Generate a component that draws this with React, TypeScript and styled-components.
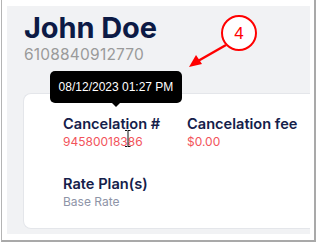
import React from 'react';
import styled, { createGlobalStyle } from 'styled-components';

const GlobalStyle = createGlobalStyle`
  html, body {
    margin: 0;
    padding: 0;
    background: #ffffff;
  }
  body {
    font-family: Inter, 'Noto Sans', sans-serif;
    width: 316px;
    height: 243px;
    overflow: hidden;
  }
`;

const Frame = styled.div`
  position: relative;
  box-sizing: border-box;
  width: 315px;
  height: 242px;
  margin-left: 1px;
  border-left: 1px solid #b4b4b4;
  border-right: 2px solid #a9a9a9;
  border-bottom: 2px solid #a9a9a9;
  padding: 6px 4px 4px 5px;
  background: #ffffff;
`;

const Page = styled.div`
  box-sizing: border-box;
  height: 228px;
  background: #f1f2f4;
  padding: 7px 0 5px 16px;
  display: flex;
  flex-direction: column;
`;

const Header = styled.div`
  padding-left: 1px;
  display: flex;
  flex-direction: column;
  gap: 3px;
`;

const Name = styled.h1`
  margin: 0;
  font-family: Inter, sans-serif;
  font-size: 29px;
  line-height: 30px;
  font-weight: 700;
  letter-spacing: -0.1px;
  color: #0c1a45;
`;

const Phone = styled.div`
  font-family: Inter, sans-serif;
  font-size: 15.5px;
  line-height: 18px;
  color: #9a9a9a;
  letter-spacing: 0.2px;
`;

const Card = styled.div`
  margin-top: 29px;
  flex: 1;
  background: #ffffff;
  border: 1px solid #e4e6ea;
  border-right: none;
  border-radius: 8px 0 0 8px;
  padding: 21px 0 0 39px;
  display: grid;
  grid-template-columns: 124px 1fr;
  row-gap: 25px;
  align-content: start;
`;

const Field = styled.div`
  display: flex;
  flex-direction: column;
`;

const Label = styled.div`
  font-family: Inter, sans-serif;
  font-weight: 600;
  font-size: 14.6px;
  line-height: 18px;
  color: #14204a;
`;

const Value = styled.div<{ $tone: 'red' | 'muted' }>`
  font-family: Inter, sans-serif;
  font-size: 12px;
  line-height: 17px;
  color: ${(p) => (p.$tone === 'red' ? '#f2545b' : '#8e94a7')};
`;

const Tooltip = styled.div`
  position: absolute;
  left: 50px;
  top: 71px;
  width: 132px;
  height: 32px;
  border-radius: 5px;
  background: #000000;
  color: #ffffff;
  font-family: 'Liberation Sans', Arial, sans-serif;
  font-size: 12px;
  display: flex;
  align-items: center;
  justify-content: center;
  &::after {
    content: '';
    position: absolute;
    left: 62px;
    bottom: -4px;
    border-left: 4px solid transparent;
    border-right: 4px solid transparent;
    border-top: 4px solid #000000;
  }
`;

const Overlay = styled.svg`
  position: absolute;
  left: 0;
  top: 0;
  pointer-events: none;
`;

const Callout = () => (
  <Overlay width="316" height="243" viewBox="0 0 316 243">
    <line x1="226" y1="45" x2="198" y2="61" stroke="#f00" strokeWidth="2.5" />
    <polygon points="189,67 196,55 202,64" fill="#f00" />
    <circle cx="239" cy="33" r="17" fill="#fff" stroke="#f00" strokeWidth="2" />
    <text
      x="239"
      y="39"
      textAnchor="middle"
      fontFamily="'Liberation Sans', Arial, sans-serif"
      fontSize="17"
      fill="#f00"
    >
      4
    </text>
  </Overlay>
);

const Cursor = () => (
  <Overlay width="316" height="243" viewBox="0 0 316 243">
    <path
      d="M125 130.5h2.5M130.5 130.5h-2.5M128 131v15M125 146.5h2.5M130.5 146.5h-2.5"
      stroke="#111"
      strokeWidth="1"
      fill="none"
    />
  </Overlay>
);

const App = () => (
  <>
    <GlobalStyle />
    <Frame>
      <Page>
        <Header>
          <Name>John Doe</Name>
          <Phone>6108840912770</Phone>
        </Header>
        <Card>
          <Field>
            <Label>Cancelation #</Label>
            <Value $tone="red">94580018386</Value>
          </Field>
          <Field>
            <Label>Cancelation fee</Label>
            <Value $tone="red">$0.00</Value>
          </Field>
          <Field>
            <Label>Rate Plan(s)</Label>
            <Value $tone="muted">Base Rate</Value>
          </Field>
        </Card>
      </Page>
    </Frame>
    <Tooltip>08/12/2023 01:27 PM</Tooltip>
    <Cursor />
    <Callout />
  </>
);

export default App;
